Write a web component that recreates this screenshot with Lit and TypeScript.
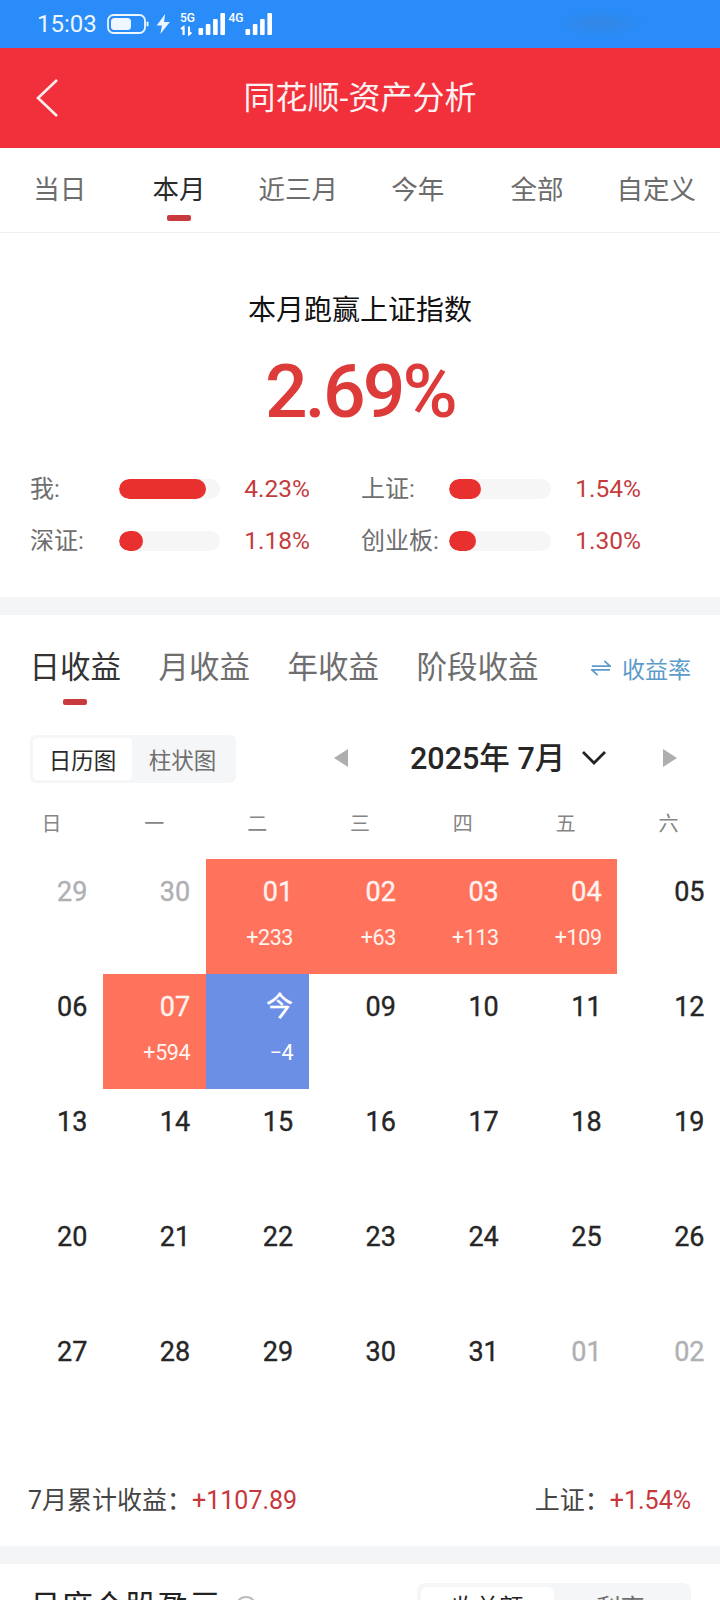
import { LitElement, html, css, svg } from "lit";
import { customElement } from "lit/decorators.js";

type Cell = { d: string; s?: string; kind?: "up" | "down"; dim?: boolean };

const topTabs = ["当日", "本月", "近三月", "今年", "全部", "自定义"];
const stats = [
  { l: "我:", w: 87, v: "4.23%" },
  { l: "上证:", w: 32, v: "1.54%" },
  { l: "深证:", w: 24, v: "1.18%" },
  { l: "创业板:", w: 27, v: "1.30%" },
];
const weekdays = ["日", "一", "二", "三", "四", "五", "六"];
const cells: Cell[] = [
  { d: "29", dim: true },
  { d: "30", dim: true },
  { d: "01", s: "+233", kind: "up" },
  { d: "02", s: "+63", kind: "up" },
  { d: "03", s: "+113", kind: "up" },
  { d: "04", s: "+109", kind: "up" },
  { d: "05" },
  { d: "06" },
  { d: "07", s: "+594", kind: "up" },
  { d: "今", s: "−4", kind: "down" },
  ...["09", "10", "11", "12", "13", "14", "15", "16", "17", "18", "19", "20", "21", "22", "23", "24", "25", "26", "27", "28", "29", "30", "31"].map((d) => ({ d })),
  { d: "01", dim: true },
  { d: "02", dim: true },
];

const bars = (heights: number[]) =>
  svg`${heights.map((h, i) => svg`<rect x=${i * 7.3} y=${22 - h} width="4.6" height=${h} rx="1" fill="#fff"></rect>`)}`;

@customElement("app-root")
export class AppRoot extends LitElement {
  static styles = css`
    :host {
      display: block;
      width: 720px;
      height: 1600px;
      overflow: hidden;
      background: #fff;
      font-family: Roboto, "Noto Sans CJK SC", sans-serif;
      color: #222;
    }
    .status {
      position: relative;
      height: 48px;
      background: #2a8cf8;
      display: flex;
      align-items: center;
      padding-left: 37px;
      color: #eef6ff;
      box-sizing: border-box;
    }
    .time { font-size: 24px; line-height: 48px; width: 70px; }
    .status svg { display: block; }
    .smudge {
      position: absolute;
      left: 555px;
      top: 10px;
      width: 90px;
      height: 26px;
      background: radial-gradient(ellipse at center, rgba(70, 125, 190, 0.35), rgba(42, 140, 248, 0) 70%);
    }
    .nav {
      height: 100px;
      background: #f2303c;
      display: flex;
      align-items: center;
      position: relative;
      color: #fdf2f2;
    }
    .back { margin-left: 35px; display: block; }
    .nav-title {
      position: absolute;
      left: 0;
      right: 0;
      text-align: center;
      font-size: 32px;
      line-height: 40px;
    }
    .top-tabs {
      height: 84px;
      display: grid;
      grid-template-columns: repeat(6, 1fr);
      padding-right: 4px;
      border-bottom: 1px solid #efeff0;
    }
    .top-tab {
      display: flex;
      flex-direction: column;
      align-items: center;
      padding-top: 25px;
      font-size: 26.5px;
      line-height: 34px;
      color: #6c6c6c;
    }
    .top-tab.on { color: #2a2a2a; }
    .mark { width: 24px; height: 6px; border-radius: 2px; background: #c93a3e; }
    .top-tab .mark { margin-top: 8px; }
    .summary {
      height: 364px;
      box-sizing: border-box;
      padding-top: 58px;
      text-align: center;
    }
    .summary-title { font-size: 28px; line-height: 40px; color: #111; }
    .big {
      margin-top: 20px;
      font-size: 75px;
      line-height: 80px;
      font-weight: 500;
      color: #dd3a3a;
      letter-spacing: -2.8px;
    }
    .stats {
      margin-top: 42px;
      padding-left: 30px;
      display: grid;
      grid-template-columns: 89px 101px 90px 139px 102px 90px;
      row-gap: 20px;
      text-align: left;
    }
    .stat { display: contents; }
    .stat-label { font-size: 24px; line-height: 32px; color: #6e6e6e; white-space: nowrap; }
    .stat:nth-child(even) .stat-label { margin-left: 51px; }
    .track {
      height: 20px;
      align-self: center;
      border-radius: 10px;
      background: #f6f6f7;
      overflow: hidden;
    }
    .fill { height: 100%; border-radius: 10px; background: #e8302f; }
    .stat-value {
      font-size: 24.5px;
      line-height: 32px;
      text-align: right;
      color: #c43c3e;
    }
    .band { height: 18px; background: #f4f5f6; }
    .earn { height: 931px; box-sizing: border-box; padding-top: 33px; }
    .earn-tabs { display: flex; padding: 0 29px 0 29.5px; gap: 37.5px; height: 57px; }
    .earn-tab {
      display: flex;
      flex-direction: column;
      align-items: center;
      font-size: 30.5px;
      line-height: 40px;
      color: #6e6e6e;
    }
    .earn-tab.on { color: #333; }
    .earn-tab .mark { margin-top: 11px; }
    .rate {
      margin-left: auto;
      display: flex;
      align-items: center;
      gap: 11px;
      height: 40px;
      font-size: 23px;
      color: #5d9cca;
    }
    .tools { margin-top: 30px; height: 48px; padding-left: 30px; display: flex; align-items: center; }
    .seg {
      width: 206px;
      height: 48px;
      box-sizing: border-box;
      padding: 3px;
      border-radius: 6px;
      background: #f5f6f8;
      display: flex;
    }
    .seg-item {
      display: flex;
      align-items: center;
      justify-content: center;
      font-size: 22.5px;
      color: #6e6e6e;
      width: 99px;
      border-radius: 4px;
    }
    .seg-item.on { background: #fff; color: #2a2a2a; }
    .seg-item.rest { width: 101px; }
    .month-nav { margin-left: 98px; width: 343px; display: flex; align-items: center; }
    .tri { display: block; flex: none; margin-top: -2px; }
    .month {
      margin-left: 62px;
      font-size: 30.5px;
      font-weight: 500;
      color: #262626;
      line-height: 40px;
      white-space: nowrap;
      width: 154px;
    }
    .chev { margin-left: 17px; margin-top: -3px; display: block; flex: none; }
    .tri.next { margin-left: auto; }
    .weeks {
      margin-top: 26px;
      display: grid;
      grid-template-columns: repeat(7, 1fr);
      text-align: center;
      font-size: 20px;
      line-height: 30px;
      color: #858585;
    }
    .cal { margin-top: 20px; display: grid; grid-template-columns: repeat(7, 1fr); grid-auto-rows: 115px; }
    .cell {
      box-sizing: border-box;
      padding: 16px 15.5px 0 0;
      text-align: right;
      color: #262626;
    }
    .cell.dim { color: #aeb0b3; }
    .cell.up { background: #ff725c; color: #fff3ef; }
    .cell.down { background: #6c8fe6; color: #fff; }
    .num { font-size: 27px; line-height: 34px; font-weight: 400; -webkit-text-stroke: 0.35px currentColor; }
    .sub { margin-top: 14px; font-size: 21.5px; line-height: 30px; letter-spacing: -0.4px; }
    .total {
      margin-top: 50px;
      display: flex;
      justify-content: space-between;
      padding: 0 29px 0 28px;
      font-size: 25px;
      line-height: 34px;
      color: #444;
    }
    .red { color: #c7383d; }
    .foot { padding: 19px 29px 0 29px; display: flex; justify-content: space-between; }
    .foot-title { display: flex; align-items: center; gap: 14px; font-size: 32px; line-height: 40px; padding-top: 4px; height: 40px; color: #222; }
    .help { width: 22px; height: 22px; border: 2px solid #bbb; border-radius: 50%; box-sizing: border-box; }
    .toggle { width: 274px; height: 60px; box-sizing: border-box; padding: 4px; border-radius: 8px; background: #f5f6f8; display: flex; font-size: 24px; }
    .toggle-item { width: 134px; text-align: center; line-height: 42px; color: #6e6e6e; border-radius: 6px; }
    .toggle-item.on { background: #fff; color: #222; }
  `;

  render() {
    return html`
      <div class="status">
        <span class="time">15:03</span>
        <svg width="42" height="20" viewBox="0 0 42 20">
          <rect x="1" y="1" width="37" height="18" rx="5.5" fill="none" stroke="#eef6ff" stroke-width="1.8"></rect>
          <rect x="4" y="4" width="20" height="12" rx="3.5" fill="#eef6ff"></rect>
          <rect x="39.5" y="7.5" width="2" height="5" rx="1" fill="#eef6ff"></rect>
        </svg>
        <svg style="margin-left:6px" width="16" height="20" viewBox="0 0 14 19">
          <path d="M9 0 L1 11 H6 L4.5 19 L13.5 7.5 H8 Z" fill="#eef6ff"></path>
        </svg>
        <svg style="margin-left:9px" width="98" height="24" viewBox="0 0 98 24">
          <text x="0" y="9.5" font-size="12" font-weight="500" font-family="Roboto" fill="#fff">5G</text>
          <path d="M3.5 23 V15 L1 17 M3.7 15 V23 M9 14.5 V22.5 L11.5 20.5" fill="none" stroke="#fff" stroke-width="2"></path>
          <g transform="translate(18.5,1)">${bars([7, 11, 16, 22])}</g>
          <text x="48.5" y="9.5" font-size="12" font-weight="500" font-family="Roboto" fill="#fff">4G</text>
          <g transform="translate(65.5,1)">${bars([6, 11, 16, 22])}</g>
        </svg>
        <div class="smudge"></div>
      </div>

      <div class="nav">
        <svg class="back" width="24" height="40" viewBox="0 0 24 40">
          <path d="M22 2 L3 20 L22 38" fill="none" stroke="#fdeeee" stroke-width="2.6"></path>
        </svg>
        <div class="nav-title">同花顺-资产分析</div>
      </div>

      <div class="top-tabs">
        ${topTabs.map(
          (t, i) => html`<div class="top-tab ${i === 1 ? "on" : ""}">${t}${i === 1 ? html`<div class="mark"></div>` : ""}</div>`
        )}
      </div>

      <div class="summary">
        <div class="summary-title">本月跑赢上证指数</div>
        <div class="big">2.69%</div>
        <div class="stats">
          ${stats.map(
            (s) => html`<div class="stat">
              <div class="stat-label">${s.l}</div>
              <div class="track"><div class="fill" style="width:${s.w}px"></div></div>
              <div class="stat-value">${s.v}</div>
            </div>`
          )}
        </div>
      </div>

      <div class="band"></div>

      <div class="earn">
        <div class="earn-tabs">
          <div class="earn-tab on">日收益<div class="mark"></div></div>
          <div class="earn-tab">月收益</div>
          <div class="earn-tab">年收益</div>
          <div class="earn-tab">阶段收益</div>
          <div class="rate">
            <svg width="20" height="18" viewBox="0 0 21 18">
              <path d="M1 7 H20 L14 1.5 M20 11 H1 L7 16.5" fill="none" stroke="#5d9cca" stroke-width="1.8"></path>
            </svg>
            收益率
          </div>
        </div>
        <div class="tools">
          <div class="seg">
            <div class="seg-item on">日历图</div>
            <div class="seg-item rest">柱状图</div>
          </div>
          <div class="month-nav">
            <svg class="tri" width="14" height="18" viewBox="0 0 14 18"><path d="M14 0 V18 L0 9 Z" fill="#aeaeb0"></path></svg>
            <div class="month">2025年 7月</div>
            <svg class="chev" width="26" height="15" viewBox="0 0 26 15"><path d="M2 2 L13 13 L24 2" fill="none" stroke="#222" stroke-width="2.8"></path></svg>
            <svg class="tri next" width="14" height="18" viewBox="0 0 14 18"><path d="M0 0 V18 L14 9 Z" fill="#aeaeb0"></path></svg>
          </div>
        </div>
        <div class="weeks">${weekdays.map((w) => html`<div>${w}</div>`)}</div>
        <div class="cal">
          ${cells.map(
            (c) => html`<div class="cell ${c.kind ?? ""} ${c.dim ? "dim" : ""}">
              <div class="num">${c.d}</div>
              ${c.s ? html`<div class="sub">${c.s}</div>` : ""}
            </div>`
          )}
        </div>
        <div class="total">
          <div>7月累计收益：<span class="red">+1107.89</span></div>
          <div>上证：<span class="red">+1.54%</span></div>
        </div>
      </div>

      <div class="band"></div>

      <div class="foot">
        <div class="foot-title">月度个股盈亏<span class="help"></span></div>
        <div class="toggle">
          <div class="toggle-item on">收益额</div>
          <div class="toggle-item">利率</div>
        </div>
      </div>
    `;
  }
}
